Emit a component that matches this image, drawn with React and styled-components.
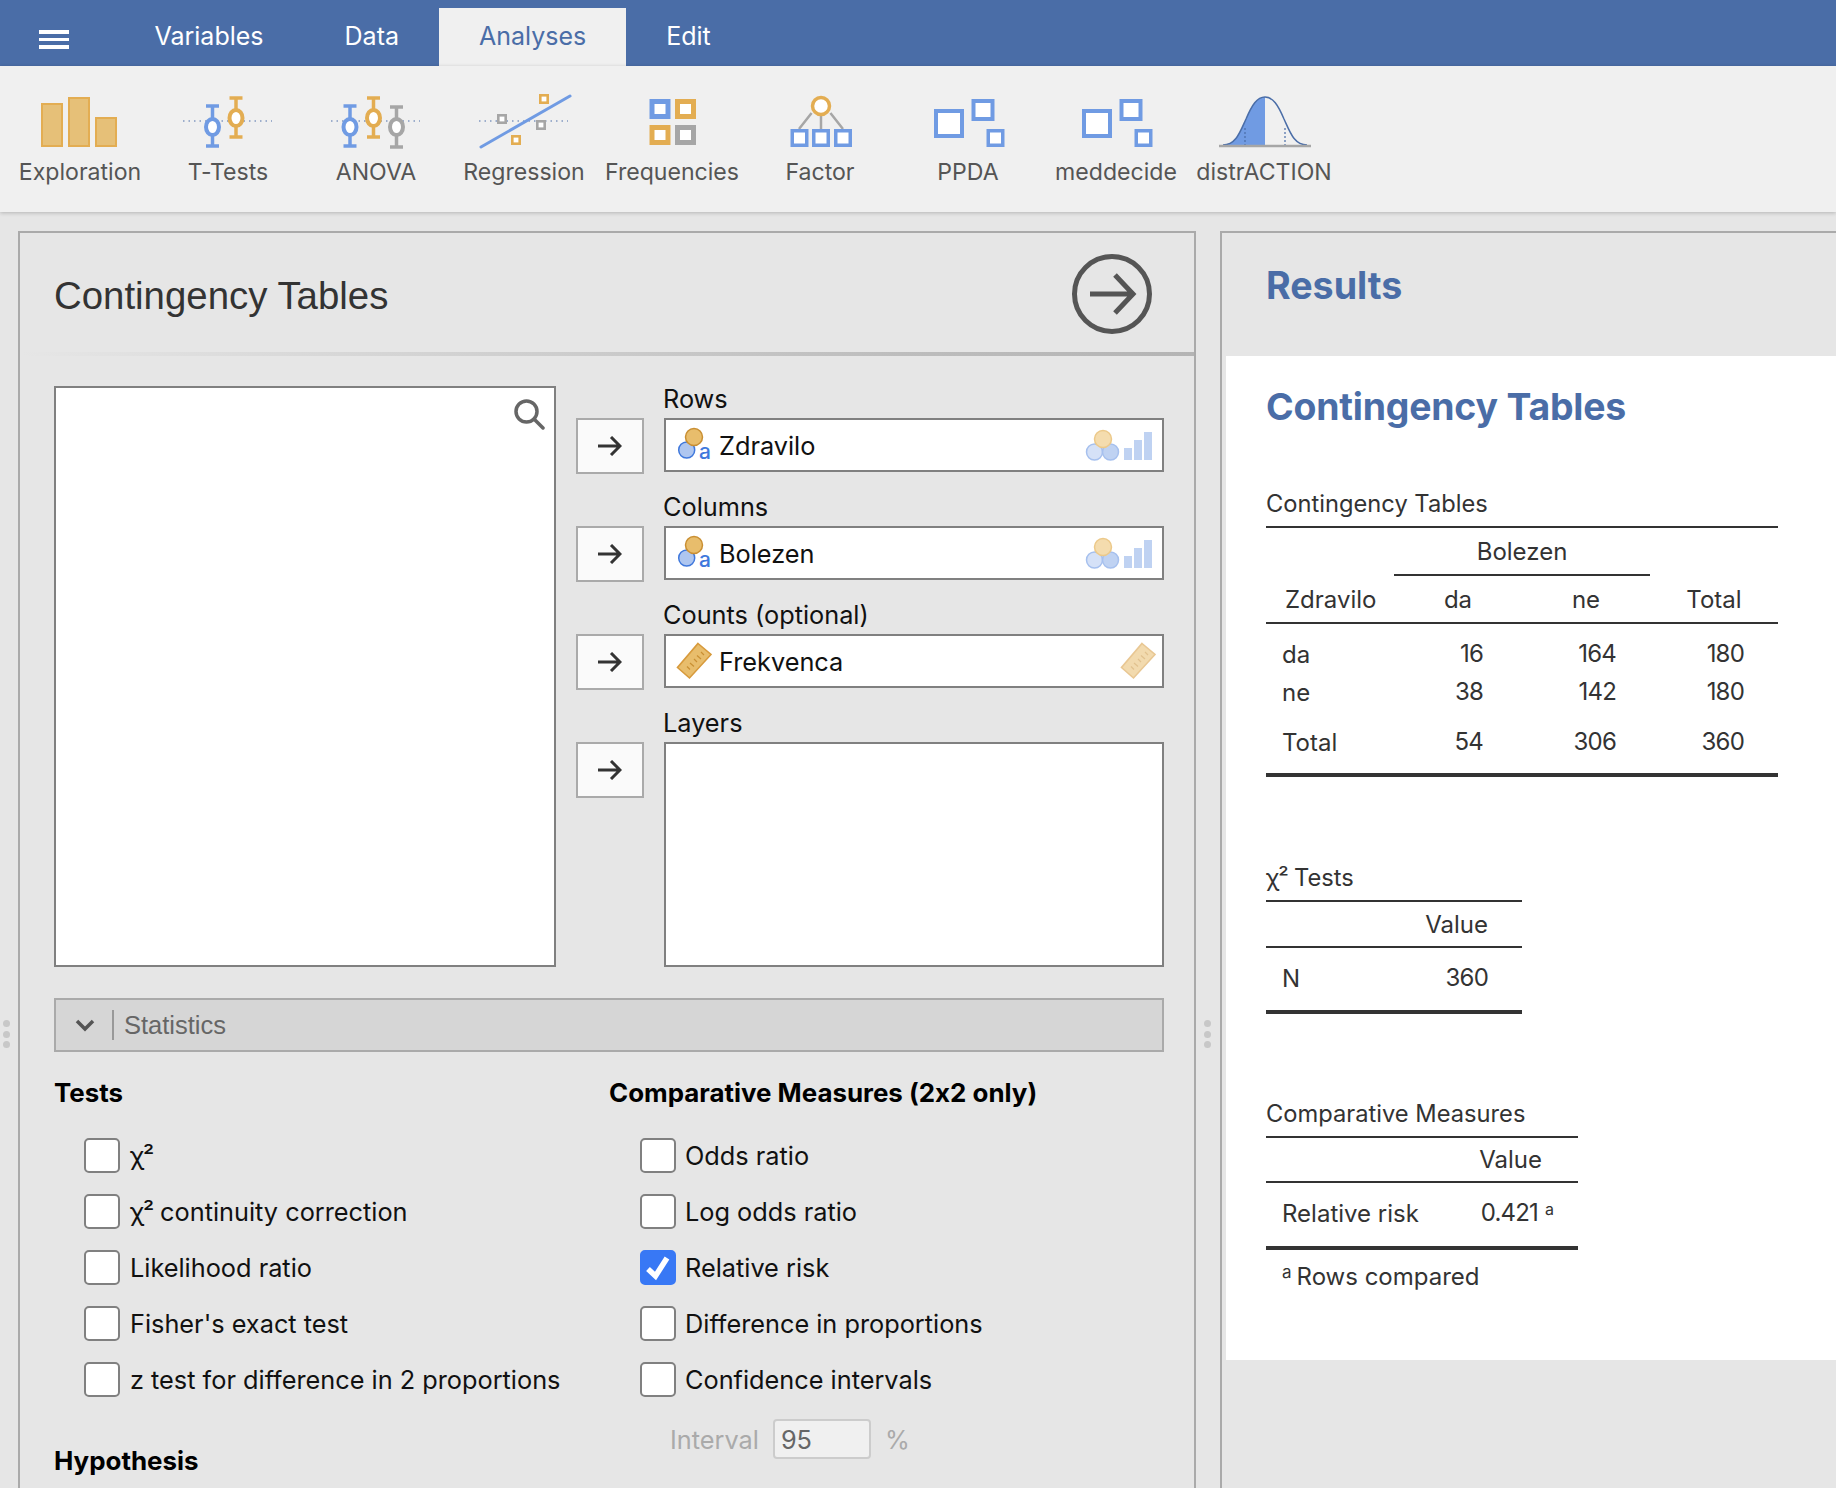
import React from 'react';
import styled, { createGlobalStyle } from 'styled-components';

const GlobalStyle = createGlobalStyle`
  html, body { margin: 0; padding: 0; }
  body {
    font-family: Inter, "Liberation Sans", sans-serif;
    font-feature-settings: "calt" 0;
    background: #e6e6e6;
  }
`;

const Page = styled.div`
  width: 1836px;
  height: 1488px;
  overflow: hidden;
  display: flex;
  flex-direction: column;
  background: #e6e6e6;
`;

const MenuBar = styled.div`
  height: 66px;
  flex: none;
  display: flex;
  background: #4a6da7;
`;

const Burger = styled.div`
  width: 114px;
  padding: 30px 0 0 39px;
  box-sizing: border-box;
  display: flex;
  flex-direction: column;
  gap: 4px;
  span { display: block; width: 30px; height: 3.5px; background: #fff; }
`;

const MenuTab = styled.div`
  margin-top: 8px;
  padding: 0 ${(p) => (p.$active ? 39.5 : 40.5)}px 2px;
  display: flex;
  align-items: center;
  font-size: 25px;
  color: ${(p) => (p.$active ? '#4a6da7' : '#fff')};
  background: ${(p) => (p.$active ? '#f0f0f0' : 'transparent')};
`;

const Toolbar = styled.div`
  height: 146px;
  flex: none;
  box-sizing: border-box;
  padding: 22px 0 0 6px;
  display: flex;
  background: #f0f0f0;
  box-shadow: 0 1px 4px rgba(0, 0, 0, 0.22);
  position: relative;
`;

const ToolItem = styled.div`
  width: 148px;
  display: flex;
  flex-direction: column;
  align-items: center;
  font-size: 23.1px;
  color: #555;
  white-space: nowrap;
  svg { display: block; margin-bottom: 6px; }
`;

const Main = styled.div`
  flex: 1;
  display: flex;
  padding-top: 19px;
  min-height: 0;
`;

const Grip = styled.div`
  flex: none;
  width: ${(p) => p.$w}px;
  box-sizing: border-box;
  padding: 789px 0 0 ${(p) => p.$left}px;
  display: flex;
  flex-direction: column;
  gap: 3.5px;
  span { display: block; width: 7px; height: 7px; border-radius: 50%; background: #c8c8c8; }
`;

const OptionsPanel = styled.div`
  flex: none;
  width: 1178px;
  box-sizing: border-box;
  border: 2px solid #aaa;
  border-bottom: 0;
  background: #e6e6e6;
`;

const PanelHead = styled.div`
  height: 119px;
  box-sizing: border-box;
  padding: 2px 41.5px 0 34px;
  display: flex;
  align-items: center;
  justify-content: space-between;
`;

const PanelTitle = styled.div`
  font-family: "Liberation Sans", Arial, sans-serif;
  font-size: 38.4px;
  color: #333;
  position: relative;
  top: 2px;
`;

const HeadRule = styled.div`
  height: 4px;
  background: linear-gradient(to right, #e6e6e6 0%, #bdbdbd 75%, #b4b4b4 100%);
`;

const PanelBody = styled.div`
  padding: 30px 30px 0 34px;
`;

const VarArea = styled.div`
  display: grid;
  grid-template-columns: 502px 1fr;
  gap: 20px;
`;

const SourceBox = styled.div`
  height: 581px;
  box-sizing: border-box;
  border: 2px solid #808080;
  background: #fff;
  display: flex;
  justify-content: flex-end;
  padding: 10px 9px 0 0;
  align-items: flex-start;
`;

const TargetRow = styled.div`
  display: grid;
  grid-template-columns: 68px 500px;
  column-gap: 20px;
  grid-template-rows: 32px auto;
  margin-bottom: 20px;
  &:last-child { margin-bottom: 0; }
`;

const TargetLabel = styled.div`
  grid-column: 2;
  margin-left: -1px;
  font-size: 25.3px;
  line-height: 25px;
  color: #111;
`;

const ArrowBtn = styled.div`
  grid-column: 1;
  grid-row: 2;
  height: 56px;
  box-sizing: border-box;
  border: 2px solid #aaa;
  background: #fafafa;
  display: flex;
  align-items: center;
  justify-content: center;
`;

const TargetBox = styled.div`
  grid-column: 2;
  grid-row: 2;
  height: ${(p) => p.$h || 54}px;
  box-sizing: border-box;
  border: 2px solid #808080;
  background: #fff;
  display: flex;
  align-items: center;
  padding: 0 ${(p) => p.$pr || 8}px 0 10px;
  font-size: 25.3px;
  color: #111;
  gap: 7px;
  svg:last-child { margin-left: auto; }
`;

const SectionBar = styled.div`
  margin-top: 31px;
  height: 54px;
  box-sizing: border-box;
  border: 2px solid #aaa;
  background: #d6d6d6;
  display: flex;
  align-items: center;
  padding-left: 19px;
`;

const SectionName = styled.div`
  font-family: "Liberation Sans", Arial, sans-serif;
  font-size: 25.5px;
  color: #666;
  margin-left: 17px;
  padding-left: 10px;
  border-left: 2px solid #999;
  line-height: 30px;
`;

const OptionsGrid = styled.div`
  display: grid;
  grid-template-columns: 555px 1fr;
  padding-top: 26px;
`;

const GroupTitle = styled.div`
  font-size: 25.9px;
  font-weight: 700;
  line-height: 30px;
  color: #000;
  margin-top: ${(p) => p.$mt || 0}px;
`;

const CheckList = styled.div`
  margin-top: 30px;
  padding-left: ${(p) => p.$pl}px;
  display: flex;
  flex-direction: column;
  gap: 21px;
`;

const CheckRow = styled.div`
  display: flex;
  align-items: center;
  gap: ${(p) => p.$gap}px;
  height: 35px;
  font-size: 25.3px;
  line-height: 34px;
  color: #111;
  white-space: nowrap;
`;

const Box = styled.div`
  flex: none;
  width: 36px;
  height: 35px;
  box-sizing: border-box;
  border-radius: 5px;
  border: 2px solid ${(p) => (p.$on ? '#3878f5' : '#808080')};
  background: ${(p) => (p.$on ? '#3878f5' : '#fff')};
  display: flex;
  align-items: center;
  justify-content: center;
`;

const Chi = styled.span`
  letter-spacing: -1.3px;
`;

const IntervalRow = styled.div`
  margin: 22px 0 0 61px;
  display: flex;
  align-items: center;
  gap: 14px;
  font-size: 25.3px;
  color: #aaa;
`;

const IntervalInput = styled.div`
  width: 98px;
  height: 40px;
  box-sizing: border-box;
  border: 2px solid #ccc;
  border-radius: 4px;
  background: #f0f0f0;
  color: #666;
  padding-left: 6px;
  display: flex;
  align-items: center;
`;

const ResultsPanel = styled.div`
  flex: 1;
  min-width: 0;
  box-sizing: border-box;
  border-top: 2px solid #aaa;
  border-left: 2px solid #aaa;
  display: flex;
  flex-direction: column;
`;

const ResultsHead = styled.div`
  height: 123px;
  flex: none;
  box-sizing: border-box;
  padding: 33px 0 0 44px;
  font-size: 37.6px;
  line-height: 40px;
  font-weight: 700;
  color: #4a6da7;
`;

const ResultsSheet = styled.div`
  margin-left: 4px;
  height: 1004px;
  flex: none;
  box-sizing: border-box;
  padding: 31px 0 0 40px;
  background: #fff;
  color: #333;
`;

const SheetTitle = styled.div`
  font-size: 37.4px;
  letter-spacing: -0.2px;
  line-height: 40px;
  font-weight: 700;
  color: #4a6da7;
  margin-bottom: 62px;
`;

const TableTitle = styled.div`
  font-size: 23.7px;
  line-height: 30px;
  margin-top: ${(p) => p.$mt || 0}px;
  margin-bottom: 7px;
`;

const Table = styled.table`
  table-layout: fixed;
  border-collapse: separate;
  border-spacing: 0;
  width: ${(p) => p.$w}px;
  border-top: 2px solid #333;
  font-size: 24px;
  th, td { padding: 0; font-weight: 400; box-sizing: border-box; }
`;

const Head = styled.th`
  height: ${(p) => p.$h || 46}px;
  text-align: ${(p) => p.$align || 'center'};
  padding-left: ${(p) => p.$pl || 0}px !important;
  padding-right: ${(p) => p.$pr || 0}px !important;
  border-bottom: ${(p) => (p.$rule ? '2px solid #333' : '0')};
`;

const Cell = styled.td`
  height: ${(p) => p.$h}px;
  text-align: left;
  vertical-align: ${(p) => p.$va || 'middle'};
  padding-left: ${(p) => p.$pl || 0}px !important;
  padding-top: ${(p) => p.$pt || 0}px !important;
  padding-bottom: ${(p) => p.$pb || 0}px !important;
  border-bottom: ${(p) => (p.$last ? '4px solid #333' : '0')};
`;

const NumCell = styled(Cell)`
  text-align: right;
  letter-spacing: -0.8px;
  padding-right: ${(p) => p.$pr || 0}px !important;
`;

const Sup = styled.span`
  font-size: 16px;
  letter-spacing: 0;
  vertical-align: 6px;
  margin-left: 7px;
`;

const Footnote = styled.div`
  font-size: 24px;
  line-height: 30px;
  padding: 12px 0 0 16px;
  sup { font-size: 17px; line-height: 0; vertical-align: 7px; margin-right: 5px; }
`;

const BLUE = '#709be3';
const ORANGE = '#e3ad52';
const GRAY = '#a6a6a6';

const Sq = ({ x, y, w, h, c, s = 4 }) => (
  <rect x={x + s / 2} y={y + s / 2} width={w - s} height={h - s} fill="#fff" stroke={c} strokeWidth={s} />
);

const Whisker = ({ x, top, bottom, cy, c }) => (
  <g stroke={c} strokeWidth="3.5" fill="none">
    <path d={`M${x - 6.5} ${top}H${x + 6.5}M${x} ${top}V${bottom}M${x - 6.5} ${bottom}H${x + 6.5}`} />
    <ellipse cx={x} cy={cy} rx="6.5" ry="8" fill="#fff" strokeWidth="4" />
  </g>
);

const Dots = () => <path d="M29 33H118" stroke="#4a6da7" strokeWidth="1.2" strokeDasharray="1.5 4" fill="none" />;

const Bars = () => (
  <g fill="#e6c078" stroke={ORANGE} strokeWidth="2">
    <rect x="36" y="16" width="20" height="42" />
    <rect x="63" y="10" width="20" height="48" />
    <rect x="90" y="30" width="20" height="28" />
  </g>
);

const Blobs = () => (
  <>
    <Sq x={40} y={21} w={30} h={29} c={BLUE} />
    <Sq x={77.5} y={11} w={23} h={22} c={BLUE} />
    <Sq x={92.5} y={41} w={18} h={18} c={BLUE} s={3.5} />
  </>
);

const icons = {
  exploration: <Bars />,
  ttests: (
    <>
      <Dots />
      <Whisker x={58.5} top={18} bottom={58} cy={39} c={BLUE} />
      <Whisker x={82} top={10} bottom={49} cy={30} c={ORANGE} />
    </>
  ),
  anova: (
    <>
      <Dots />
      <Whisker x={48} top={18} bottom={58} cy={39} c={BLUE} />
      <Whisker x={71.5} top={10} bottom={49} cy={30} c={ORANGE} />
      <Whisker x={94.5} top={19} bottom={59} cy={39} c={GRAY} />
    </>
  ),
  regression: (
    <>
      <Dots />
      <path d="M31 59L120 8" stroke={BLUE} strokeWidth="3" strokeLinecap="round" />
      <Sq x={89} y={6} w={10} h={10} c={ORANGE} s={2.6} />
      <Sq x={47} y={26} w={10} h={10} c={GRAY} s={2.6} />
      <Sq x={86} y={32} w={10} h={10} c={GRAY} s={2.6} />
      <Sq x={61} y={47} w={10} h={10} c={ORANGE} s={2.6} />
    </>
  ),
  frequencies: (
    <>
      <Sq x={51.5} y={11} w={21} h={20} c={BLUE} s={5} />
      <Sq x={77} y={11} w={21} h={20} c={ORANGE} s={5} />
      <Sq x={51.5} y={37} w={21} h={20} c={ORANGE} s={5} />
      <Sq x={77} y={37} w={21} h={20} c={GRAY} s={5} />
    </>
  ),
  factor: (
    <>
      <path d="M65.6 25L53 41M75 28V41M84.4 25L97 41" stroke={GRAY} strokeWidth="2.5" fill="none" />
      <circle cx="75" cy="18" r="8.5" fill="#fff" stroke={ORANGE} strokeWidth="3.5" />
      <Sq x={44.5} y={41} w={18} h={18} c={BLUE} s={3.5} />
      <Sq x={66} y={41} w={18} h={18} c={BLUE} s={3.5} />
      <Sq x={88} y={41} w={18} h={18} c={BLUE} s={3.5} />
    </>
  ),
  blobs: <Blobs />,
  distr: (
    <>
      <path d="M33 57C46 57 50 44 56 31C62 17 67 9 75 9V57Z" fill={BLUE} />
      <path d="M33 57C46 57 50 44 56 31C62 17 67 9 75 9C83 9 88 17 94 31C100 44 104 57 117 57" fill="none" stroke="#4a6da7" strokeWidth="1.5" />
      <path d="M55 40V57M95 40V57" stroke="#4a6da7" strokeWidth="1.2" strokeDasharray="2 2" />
      <path d="M29 58H121" stroke={GRAY} strokeWidth="2.5" />
    </>
  ),
};

const tools = [
  ['Exploration', 'exploration'],
  ['T-Tests', 'ttests'],
  ['ANOVA', 'anova'],
  ['Regression', 'regression'],
  ['Frequencies', 'frequencies'],
  ['Factor', 'factor'],
  ['PPDA', 'blobs'],
  ['meddecide', 'blobs'],
  ['distrACTION', 'distr'],
];

const RunIcon = () => (
  <svg width="82" height="82" viewBox="0 0 82 82" fill="none" stroke="#555" strokeWidth="5">
    <circle cx="41" cy="41" r="37.5" />
    <path d="M19 41H61M44 22L62 41L44 60" strokeWidth="5" />
  </svg>
);

const SearchIcon = () => (
  <svg width="32" height="32" viewBox="0 0 32 32" fill="none" stroke="#666" strokeWidth="3.5">
    <circle cx="13.5" cy="13.5" r="10.5" />
    <path d="M21 21L30 30" strokeLinecap="round" />
  </svg>
);

const Arrow = () => (
  <svg width="24" height="20" viewBox="0 0 24 20" fill="none" stroke="#333" strokeWidth="3">
    <path d="M0 10H22M13 1L22 10L13 19" />
  </svg>
);

const NominalIcon = () => (
  <svg width="36" height="36" viewBox="0 0 36 36">
    <circle cx="10.7" cy="23" r="8" fill="#aec6f0" stroke="#3f78dc" strokeWidth="1.5" />
    <circle cx="18" cy="10" r="8.5" fill="#e8bd6c" stroke="#c98f33" strokeWidth="1.5" />
    <text x="23" y="32" fontFamily="Inter, sans-serif" fontSize="21" fontWeight="500" fill="#3f78dc">a</text>
  </svg>
);

const PermittedNominal = () => (
  <svg width="70" height="36" viewBox="0 0 70 36">
    <circle cx="10.5" cy="25" r="8" fill="#d5e1f7" stroke="#a6c0ee" strokeWidth="1.5" />
    <circle cx="26.5" cy="25" r="8" fill="#bfd2f2" stroke="#a6c0ee" strokeWidth="1.5" />
    <circle cx="19" cy="12" r="8.5" fill="#f4dcae" stroke="#ecc98a" strokeWidth="1.5" />
    <rect x="40" y="21" width="8" height="12" fill="#bfd2f2" />
    <rect x="50" y="13" width="8" height="20" fill="#bfd2f2" />
    <rect x="60" y="5" width="8" height="28" fill="#bfd2f2" />
  </svg>
);

const Ruler = ({ faded }) => (
  <svg width="36" height="38" viewBox="0 0 36 38" opacity={faded ? 0.55 : 1}>
    <path d="M22 1.5L35 12.5L13.5 36L1.5 25.5Z" fill="#e8bd6c" stroke="#d79a3c" strokeWidth="1.6" />
    <path d="M25 10L28 13M21 13.5L25 17M18 17L21 20M14 21L18 24.5M11 24.5L14 27.5" stroke="#c98f33" strokeWidth="1.2" fill="none" />
  </svg>
);

const Tick = () => (
  <svg width="27" height="27" viewBox="0 0 27 27" fill="none" stroke="#fff" strokeWidth="5.5">
    <path d="M3 15L10.5 22L22 4" />
  </svg>
);

const Chevron = () => (
  <svg width="20" height="14" viewBox="0 0 20 14" fill="none" stroke="#555" strokeWidth="3.5">
    <path d="M2 3L10 11L18 3" />
  </svg>
);

const leftChecks = ['χ²', 'χ² continuity correction', 'Likelihood ratio', "Fisher's exact test", 'z test for difference in 2 proportions'];
const rightChecks = ['Odds ratio', 'Log odds ratio', 'Relative risk', 'Difference in proportions', 'Confidence intervals'];

const counts = [
  { label: 'da', h: 45, pb: 0, values: ['16', '164', '180'] },
  { label: 'ne', h: 38, pb: 0, values: ['38', '142', '180'] },
];

const Target = ({ label, children, h, pr }) => (
  <TargetRow>
    <TargetLabel>{label}</TargetLabel>
    <ArrowBtn><Arrow /></ArrowBtn>
    <TargetBox $h={h} $pr={pr}>{children}</TargetBox>
  </TargetRow>
);

const Checks = ({ items, on, pl, gap }) => (
  <CheckList $pl={pl}>
    {items.map((t) => (
      <CheckRow key={t} $gap={gap}>
        <Box $on={t === on}>{t === on && <Tick />}</Box>
        <span>{t.startsWith('χ²') ? <><Chi>χ²</Chi>{t.slice(2)}</> : t}</span>
      </CheckRow>
    ))}
  </CheckList>
);

const GripDots = ({ w, left }) => (
  <Grip $w={w} $left={left}><span /><span /><span /></Grip>
);

export default function App() {
  return (
    <Page>
      <GlobalStyle />
      <MenuBar>
        <Burger><span /><span /><span /></Burger>
        <MenuTab>Variables</MenuTab>
        <MenuTab>Data</MenuTab>
        <MenuTab $active>Analyses</MenuTab>
        <MenuTab>Edit</MenuTab>
      </MenuBar>
      <Toolbar>
        {tools.map(([name, icon]) => (
          <ToolItem key={name}>
            <svg width="148" height="64" viewBox="0 0 148 64">{icons[icon]}</svg>
            {name}
          </ToolItem>
        ))}
      </Toolbar>
      <Main>
        <GripDots w={18} left={3} />
        <OptionsPanel>
          <PanelHead>
            <PanelTitle>Contingency Tables</PanelTitle>
            <RunIcon />
          </PanelHead>
          <HeadRule />
          <PanelBody>
            <VarArea>
              <SourceBox><SearchIcon /></SourceBox>
              <div>
                <Target label="Rows"><NominalIcon />Zdravilo<PermittedNominal /></Target>
                <Target label="Columns"><NominalIcon />Bolezen<PermittedNominal /></Target>
                <Target label="Counts (optional)" pr={6}><Ruler />Frekvenca<Ruler faded /></Target>
                <Target label="Layers" h={225} />
              </div>
            </VarArea>
            <SectionBar>
              <Chevron />
              <SectionName>Statistics</SectionName>
            </SectionBar>
            <OptionsGrid>
              <div>
                <GroupTitle>Tests</GroupTitle>
                <Checks items={leftChecks} pl={30} gap={10} />
                <GroupTitle $mt={49}>Hypothesis</GroupTitle>
              </div>
              <div>
                <GroupTitle>Comparative Measures (2x2 only)</GroupTitle>
                <Checks items={rightChecks} on="Relative risk" pl={31} gap={9} />
                <IntervalRow>
                  Interval
                  <IntervalInput>95</IntervalInput>
                  %
                </IntervalRow>
              </div>
            </OptionsGrid>
          </PanelBody>
        </OptionsPanel>
        <GripDots w={24} left={8} />
        <ResultsPanel>
          <ResultsHead>Results</ResultsHead>
          <ResultsSheet>
            <SheetTitle>Contingency Tables</SheetTitle>

            <TableTitle>Contingency Tables</TableTitle>
            <Table $w={512}>
              <colgroup>
                <col width="128" /><col width="128" /><col width="128" /><col width="128" />
              </colgroup>
              <thead>
                <tr>
                  <Head $h={48} />
                  <Head $h={48} colSpan={2} $rule>Bolezen</Head>
                  <Head $h={48} />
                </tr>
                <tr>
                  <Head $h={48} $rule $align="left" $pl={19}>Zdravilo</Head>
                  <Head $h={48} $rule>da</Head>
                  <Head $h={48} $rule>ne</Head>
                  <Head $h={48} $rule>Total</Head>
                </tr>
              </thead>
              <tbody>
                {counts.map((row) => (
                  <tr key={row.label}>
                    <Cell $h={row.h} $va="bottom" $pl={16}>{row.label}</Cell>
                    {row.values.map((v, i) => (
                      <NumCell key={i} $h={row.h} $va="bottom" $pb={1} $pr={i === 0 ? 39 : 34}>{v}</NumCell>
                    ))}
                  </tr>
                ))}
                <tr>
                  <Cell $h={70} $last $va="top" $pt={21} $pl={16}>Total</Cell>
                  <NumCell $h={70} $last $va="top" $pt={20} $pr={39}>54</NumCell>
                  <NumCell $h={70} $last $va="top" $pt={20} $pr={34}>306</NumCell>
                  <NumCell $h={70} $last $va="top" $pt={20} $pr={34}>360</NumCell>
                </tr>
              </tbody>
            </Table>

            <TableTitle $mt={86}>
              <Chi>χ²</Chi> Tests
            </TableTitle>
            <Table $w={256}>
              <colgroup><col width="128" /><col width="128" /></colgroup>
              <thead>
                <tr>
                  <Head $rule />
                  <Head $rule $align="right" $pr={34}>Value</Head>
                </tr>
              </thead>
              <tbody>
                <tr>
                  <Cell $h={66} $last $pb={2} $pl={16}>N</Cell>
                  <NumCell $h={66} $last $pb={4} $pr={34}>360</NumCell>
                </tr>
              </tbody>
            </Table>

            <TableTitle $mt={85}>Comparative Measures</TableTitle>
            <Table $w={312}>
              <colgroup><col width="190" /><col width="122" /></colgroup>
              <thead>
                <tr>
                  <Head $h={45} $rule />
                  <Head $h={45} $rule $align="right" $pr={36}>Value</Head>
                </tr>
              </thead>
              <tbody>
                <tr>
                  <Cell $h={67} $last $pb={2} $pl={16}>Relative risk</Cell>
                  <NumCell $h={67} $last $pb={4} $pr={24}>0.421<Sup>a</Sup></NumCell>
                </tr>
              </tbody>
            </Table>
            <Footnote><sup>a</sup>Rows compared</Footnote>
          </ResultsSheet>
        </ResultsPanel>
      </Main>
    </Page>
  );
}
